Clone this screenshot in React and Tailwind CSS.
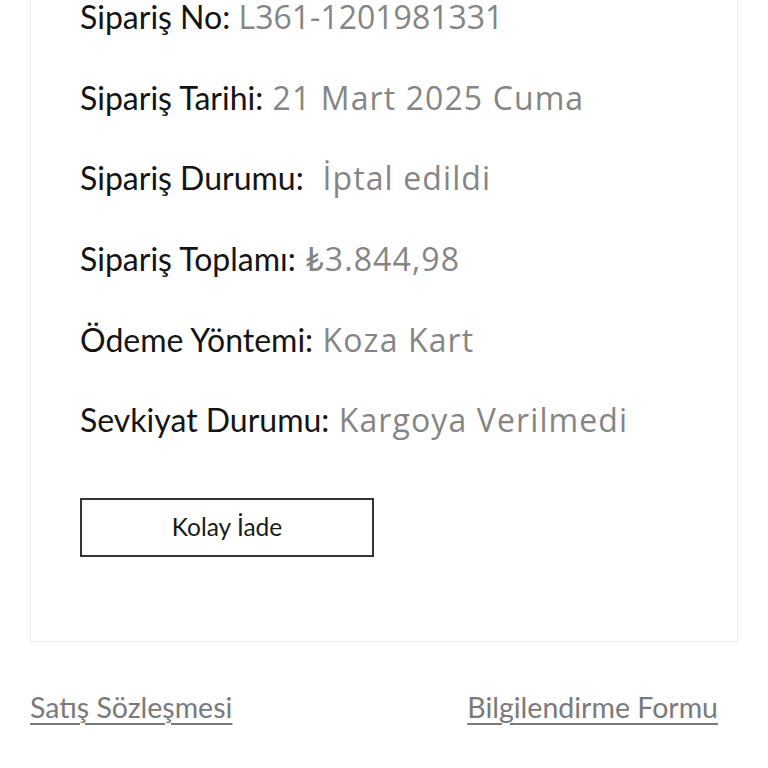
import React from "react";

const rows = [
  ["Sipariş No:", "L361-1201981331", "tracking-normal"],
  ["Sipariş Tarihi:", "21 Mart 2025 Cuma", "tracking-[1.1px]"],
  ["Sipariş Durumu:", " İptal edildi", "tracking-[1.1px]"],
  ["Sipariş Toplamı:", "₺3.844,98", "tracking-[1.1px]"],
  ["Ödeme Yöntemi:", "Koza Kart", "tracking-[1.1px]"],
  ["Sevkiyat Durumu:", "Kargoya Verilmedi", "tracking-[1.1px]"],
];

export default function App() {
  return (
    <div className="w-[768px] h-[768px] overflow-hidden bg-white" style={{ fontFamily: "Lato, 'Noto Sans', sans-serif" }}>
      <div className="mt-[-24px] mx-[30px] border border-[#ececec] pl-[49px] pb-[84px]">
        <div className="flex flex-col">
          {rows.map(([l, v, t], i) => (
            <div key={i} className="h-[80.6px] flex items-center whitespace-pre">
              <span className="text-[#141414] text-[32px]">{l}</span>
              <span className={"text-[#858585] text-[32px] " + t} style={{ fontFamily: "'Open Sans', Lato, sans-serif" }}> {v}</span>
            </div>
          ))}
        </div>
        <button className="mt-[37px] w-[294px] h-[59px] border-2 border-[#333] text-[24.5px] text-[#1a1a1a] flex items-center justify-center">
          Kolay İade
        </button>
      </div>
      <div className="flex justify-between px-[30px] mt-[44px] pr-[50px] text-[28.5px] text-[#7a7a7a]">
        <span className="underline underline-offset-[5px] decoration-[2px]">Satış Sözleşmesi</span>
        <span className="underline underline-offset-[5px] decoration-[2px]">Bilgilendirme Formu</span>
      </div>
    </div>
  );
}
